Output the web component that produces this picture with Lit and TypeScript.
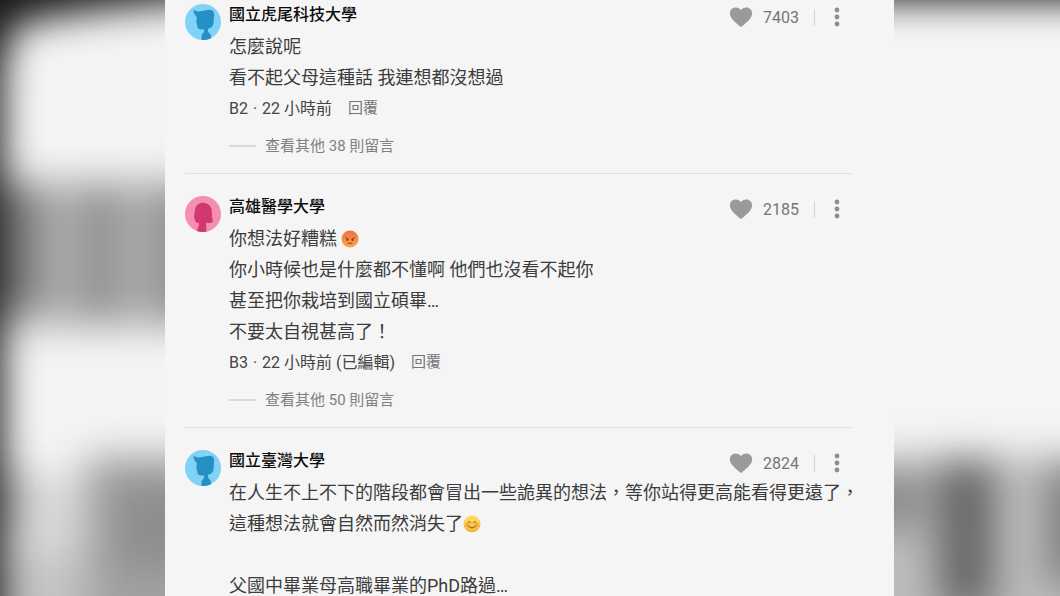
import { LitElement, html, css, svg, nothing } from "lit";
import { customElement, property } from "lit/decorators.js";

type Gender = "male" | "female";

interface Comment {
  school: string;
  gender: Gender;
  lines: string[];
  emoji?: { line: number; kind: "angry" | "smile" };
  floor?: string;
  time?: string;
  likes: number;
  replies?: number;
}

const COMMENTS: Comment[] = [
  {
    school: "國立虎尾科技大學",
    gender: "male",
    lines: ["怎麼說呢", "看不起父母這種話 我連想都沒想過"],
    floor: "B2",
    time: "22 小時前",
    likes: 7403,
    replies: 38,
  },
  {
    school: "高雄醫學大學",
    gender: "female",
    lines: [
      "你想法好糟糕 ",
      "你小時候也是什麼都不懂啊 他們也沒看不起你",
      "甚至把你栽培到國立碩畢…",
      "不要太自視甚高了！",
    ],
    emoji: { line: 0, kind: "angry" },
    floor: "B3",
    time: "22 小時前 (已編輯)",
    likes: 2185,
    replies: 50,
  },
  {
    school: "國立臺灣大學",
    gender: "male",
    lines: [
      "在人生不上不下的階段都會冒出一些詭異的想法，等你站得更高能看得更遠了，",
      "這種想法就會自然而然消失了",
      "",
      "父國中畢業母高職畢業的PhD路過…",
    ],
    emoji: { line: 1, kind: "smile" },
    likes: 2824,
  },
];

@customElement("user-avatar")
export class UserAvatar extends LitElement {
  @property() gender: Gender = "male";

  static styles = css`
    :host {
      display: block;
      width: 36px;
      height: 36px;
      border-radius: 50%;
      overflow: hidden;
    }
    svg {
      display: block;
      width: 100%;
      height: 100%;
    }
  `;

  render() {
    const male = svg`
      <rect width="36" height="36" fill="#80d3f6"/>
      <path fill="#2590c3" d="M8.500 5.500C11 7.800 14 7.600 17 7C20.500 6.200 25 4.800 27 6.300C29.500 7.500 29.500 11 28.800 14C28.500 17 29 20 27.500 22C26.500 23.800 24.500 24.500 23 24.800C22.600 27 23 28.500 24.800 29.500C26 30.500 26 32 26 36H16.500C16.500 32 16.500 30.500 18 29.300C19.300 28 19.300 26.500 18.800 25.300C16 25.800 13.300 25.300 12.600 23.500C12 21.500 12.200 20 11.200 18.600C11.700 17 11.500 15 11.800 13C9.800 11 8.300 8.500 8.500 5.500Z"/>`;
    const female = svg`
      <rect width="36" height="36" fill="#f48fb1"/>
      <path fill="#d0386f" d="M18 6.800C23.500 6.800 26.800 10.500 26.800 15.500C26.800 19.500 27.300 23 28 25.800C26 27.300 23.500 27.300 21.200 26.800C20.800 29 21.500 31 21.500 36H11.500C12.500 32 14.300 30 14 27C11.500 27.300 9.800 26 10 23.800C9.600 22.500 8.800 21.500 9 20C9.800 18 9.400 15.500 10.200 12.800C11.200 9 14 6.800 18 6.800Z"/>`;
    return html`<svg viewBox="0 0 36 36" aria-hidden="true">
      ${this.gender === "male" ? male : female}
    </svg>`;
  }
}

@customElement("face-emoji")
export class FaceEmoji extends LitElement {
  @property() kind: "angry" | "smile" = "smile";

  static styles = css`
    :host {
      display: inline-block;
      width: 18px;
      height: 18px;
      vertical-align: -3px;
    }
    svg {
      display: block;
      width: 100%;
      height: 100%;
    }
  `;

  render() {
    const angry = svg`
      <defs><linearGradient id="a" x1="0" y1="0" x2="0" y2="1">
        <stop offset="0" stop-color="#ef7040"/><stop offset="1" stop-color="#fda548"/>
      </linearGradient></defs>
      <circle cx="9" cy="9" r="8.500" fill="url(#a)"/>
      <path d="M4.500 7.500L7.500 9.200M13.500 7.500L10.500 9.200" stroke="#8f3a14" stroke-width=".9" stroke-linecap="round" fill="none"/>
      <circle cx="6.300" cy="9.900" r=".95" fill="#74351a"/>
      <circle cx="11.700" cy="9.900" r=".95" fill="#74351a"/>
      <path d="M7 13.500Q9 12.500 11 13.500" stroke="#8f3a14" stroke-width=".9" stroke-linecap="round" fill="none"/>`;
    const smile = svg`
      <defs><linearGradient id="s" x1="0" y1="0" x2="0" y2="1">
        <stop offset="0" stop-color="#fde160"/><stop offset="1" stop-color="#f8b23c"/>
      </linearGradient></defs>
      <circle cx="9" cy="9" r="8.500" fill="url(#s)"/>
      <circle cx="4" cy="10" r="2" fill="#f5943f" opacity=".5"/>
      <circle cx="14" cy="10" r="2" fill="#f5943f" opacity=".5"/>
      <path d="M4.800 7.500Q6.200 5.300 7.500 7.500M10.500 7.500Q11.800 5.300 13.200 7.500" stroke="#8a5a1c" stroke-width="1" stroke-linecap="round" fill="none"/>
      <path d="M5.300 11Q9 15 12.700 11" stroke="#8a5a1c" stroke-width="1" stroke-linecap="round" fill="none"/>`;
    return html`<svg viewBox="0 0 18 18" role="img" aria-label=${this.kind}>
      ${this.kind === "angry" ? angry : smile}
    </svg>`;
  }
}

@customElement("comment-item")
export class CommentItem extends LitElement {
  @property({ attribute: false }) comment!: Comment;

  static styles = css`
    :host {
      display: block;
    }
    .comment {
      display: grid;
      grid-template-columns: 36px minmax(0, 1fr);
      column-gap: 8px;
    }
    .avatar {
      margin-top: 1px;
    }
    .head {
      display: flex;
      justify-content: space-between;
      height: 28px;
    }
    .school {
      margin: 0;
      font-size: 16px;
      line-height: 24px;
      font-weight: 500;
      color: #0c0c0c;
    }
    .actions {
      display: flex;
      align-items: center;
      color: #757575;
    }
    button {
      font: inherit;
      color: inherit;
      background: none;
      border: 0;
      padding: 0;
      cursor: pointer;
    }
    .like {
      display: flex;
      align-items: center;
      gap: 10px;
      font-size: 16px;
    }
    .heart {
      width: 24px;
      height: 24px;
      fill: #9a9a9a;
    }
    .rule {
      width: 1px;
      height: 17px;
      margin-left: 15px;
      background: #d2d2d2;
    }
    .more {
      display: grid;
      place-items: center;
      width: 30px;
      height: 28px;
      margin-left: 7px;
    }
    .dots {
      width: 6px;
      height: 20px;
      fill: #8e8e8e;
    }
    .body {
      margin-right: -16px;
      font-size: 18px;
      line-height: 31px;
      color: #3c3c3c;
    }
    .line {
      min-height: 31px;
      white-space: pre-wrap;
    }
    .meta {
      display: flex;
      gap: 16px;
      font-size: 16px;
      line-height: 31px;
      color: #444;
    }
    .dot {
      padding: 0 1px;
    }
    .reply {
      font-size: 15px;
      color: #757575;
    }
    .replies {
      display: flex;
      align-items: center;
      gap: 9px;
      margin-top: 10px;
      font-size: 15px;
      line-height: 24px;
      color: #808080;
    }
    .dash {
      width: 27px;
      height: 2px;
      background: #d8d8d8;
    }
  `;

  render() {
    const c = this.comment;
    return html`
      <article class="comment">
        <user-avatar class="avatar" gender=${c.gender}></user-avatar>
        <div>
          <header class="head">
            <h2 class="school">${c.school}</h2>
            <div class="actions">
              <button class="like" aria-label="愛心 ${c.likes}">
                <svg class="heart" viewBox="0 0 24 24" aria-hidden="true">
                  <path d="M12 22C10.500 21 6.500 17.700 3.800 14.700C1.800 12.400 .9 10.500 .9 8.300C.9 4.900 3.500 2.500 6.600 2.500C8.900 2.500 10.900 3.500 12 5.300C13.100 3.500 15.100 2.500 17.400 2.500C20.500 2.500 23.100 4.900 23.100 8.300C23.100 10.500 22.200 12.400 20.200 14.700C17.500 17.700 13.500 21 12 22Z" />
                </svg>
                <span>${c.likes}</span>
              </button>
              <span class="rule"></span>
              <button class="more" aria-label="更多">
                <svg class="dots" viewBox="0 0 6 20" aria-hidden="true">
                  <circle cx="3" cy="3" r="2.400" />
                  <circle cx="3" cy="10" r="2.400" />
                  <circle cx="3" cy="17" r="2.400" />
                </svg>
              </button>
            </div>
          </header>
          <div class="body">
            ${c.lines.map(
              (text, i) => html`<div class="line">${text}${c.emoji?.line === i
                ? html`<face-emoji kind=${c.emoji.kind}></face-emoji>`
                : nothing}</div>`
            )}
          </div>
          ${c.floor
            ? html`<div class="meta">
                <span>${c.floor} <span class="dot">·</span> ${c.time}</span>
                <button class="reply">回覆</button>
              </div>`
            : nothing}
          ${c.replies
            ? html`<button class="replies">
                <span class="dash"></span>
                <span>查看其他 ${c.replies} 則留言</span>
              </button>`
            : nothing}
        </div>
      </article>
    `;
  }
}

@customElement("app-root")
export class AppRoot extends LitElement {
  static styles = css`
    :host {
      display: grid;
      grid-template-columns: 165fr 729fr 166fr;
      height: 100vh;
      overflow: hidden;
      background: #f5f5f5;
      font-family: Roboto, "Noto Sans CJK TC", sans-serif;
    }
    .backdrop {
      display: block;
      width: 100%;
      height: 100%;
      min-height: 0;
    }
    .thread {
      min-width: 0;
      min-height: 0;
      overflow: hidden;
      padding: 0 42px 0 20px;
      background: #f5f5f5;
    }
    .item {
      padding: 21px 0 15px;
      border-bottom: 1px solid #e2e2e2;
    }
    .item:first-child {
      padding-top: 3px;
    }
    .item:last-child {
      padding-bottom: 0;
      border-bottom: 0;
    }
  `;

  render() {
    return html`
      <svg class="backdrop" viewBox="0 0 165 596" preserveAspectRatio="none" aria-hidden="true">
        <defs>
          <filter id="soft" filterUnits="userSpaceOnUse" x="-120" y="-120" width="420" height="840" color-interpolation-filters="sRGB">
            <feGaussianBlur stdDeviation="19" />
          </filter>
          <filter id="edge" filterUnits="userSpaceOnUse" x="-120" y="-120" width="420" height="840" color-interpolation-filters="sRGB">
            <feGaussianBlur stdDeviation="19" />
          </filter>
        </defs>
        <rect width="165" height="596" fill="#f4f4f4" />
        <g filter="url(#soft)">
          <rect x="-60" y="182" width="310" height="144" fill="#acacac" />
          <rect x="-60" y="185" width="98" height="124" fill="#7c7c7c" />
          <rect x="84" y="185" width="32" height="136" fill="#8e8e8e" />
          <rect x="158" y="185" width="60" height="136" fill="#8e8e8e" />
          <rect x="-60" y="475" width="160" height="80" fill="#d8d8d8" />
          <rect x="-60" y="470" width="85" height="60" fill="#b8b8b8" />
          <rect x="-60" y="555" width="160" height="140" fill="#c4c4c4" />
          <rect x="86" y="456" width="160" height="260" fill="#a2a2a2" />
          <rect x="115" y="480" width="130" height="90" fill="#8e8e8e" />
        </g>
        <path filter="url(#edge)" fill="#161616" d="M-120-120H300V2H165L80 12L14 24L2 70V716H-120Z" />
      </svg>
      <main class="thread">
        ${COMMENTS.map(
          (c) => html`<div class="item"><comment-item .comment=${c}></comment-item></div>`
        )}
      </main>
      <svg class="backdrop" viewBox="0 0 166 596" preserveAspectRatio="none" aria-hidden="true">
        <defs>
          <filter id="haze" filterUnits="userSpaceOnUse" x="-120" y="-120" width="420" height="840" color-interpolation-filters="sRGB">
            <feGaussianBlur stdDeviation="19" />
          </filter>
        </defs>
        <rect width="166" height="596" fill="#f5f5f5" />
        <g filter="url(#haze)">
          <rect x="-110" y="-110" width="400" height="110" fill="#101010" />
          <rect x="-60" y="456" width="300" height="260" fill="#bcbcbc" />
          <rect x="-60" y="470" width="90" height="60" fill="#8c8c8c" />
          <rect x="44" y="460" width="56" height="150" fill="#666666" />
          <rect x="152" y="464" width="80" height="120" fill="#808080" />
        </g>
      </svg>
    `;
  }
}
